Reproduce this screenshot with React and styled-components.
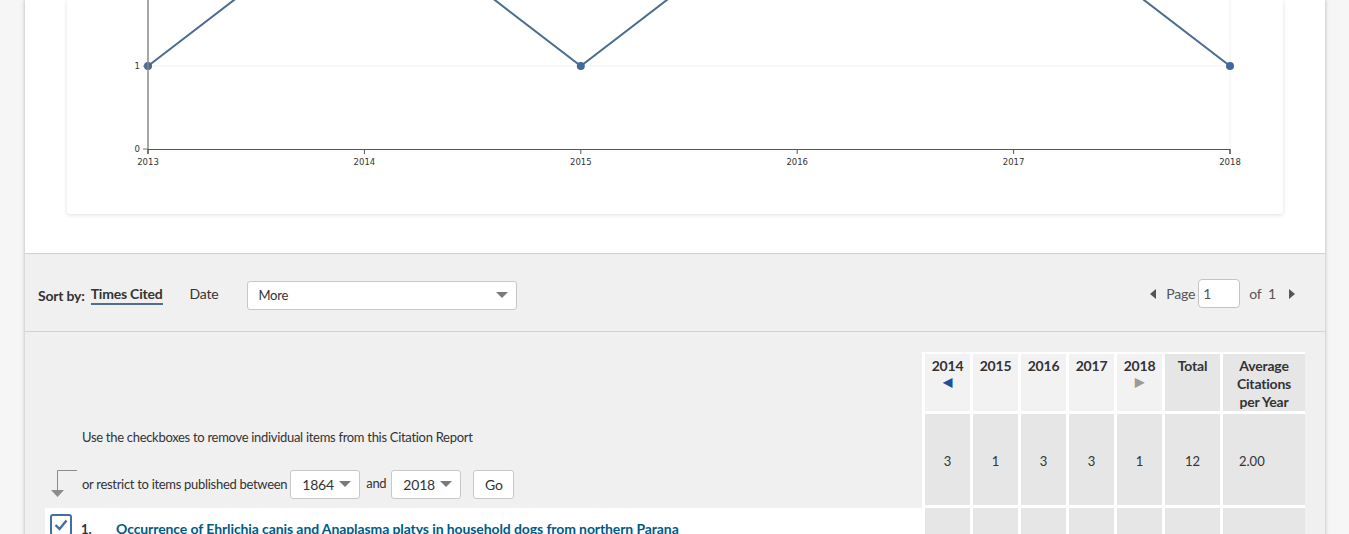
import React from "react";
import styled, { createGlobalStyle } from "styled-components";

const Global = createGlobalStyle`
  html, body { margin: 0; padding: 0; background: #f6f6f6; }
  body { font-family: "Lato", "Liberation Sans", sans-serif; color: #333; overflow: hidden; }
  * { box-sizing: border-box; }
`;

const Page = styled.div`
  margin: 0 24px 0 25px;
  background: #f0f0f0;
  box-shadow: 0 0 4px rgba(0, 0, 0, 0.28);
  min-height: 534px;
`;

const TopSection = styled.section`
  background: #fff;
  padding: 0 42px 39px;
  border-bottom: 1px solid #d2d2d2;
`;

const ChartCard = styled.div`
  background: #fff;
  height: 214px;
  border-radius: 0 0 3px 3px;
  box-shadow: 0 1px 4px rgba(0, 0, 0, 0.13);
  overflow: hidden;
`;

const SortBar = styled.div`
  height: 78px;
  display: flex;
  align-items: center;
  padding: 5px 30px 0 13px;
  border-bottom: 1px solid #d2d2d2;
  font-size: 14px;
  letter-spacing: -0.2px;
`;

const SortLabel = styled.span`
  font-weight: 700;
  color: #333;
  margin-right: 6px;
`;

const SortOption = styled.span`
  font-weight: ${(p) => (p.$active ? 700 : 400)};
  color: #333;
  margin-right: ${(p) => p.$mr || 0}px;
  padding-bottom: 1px;
  border-bottom: ${(p) => (p.$active ? "2px solid #4d6f91" : "2px solid transparent")};
`;

const Select = styled.div`
  display: flex;
  align-items: center;
  justify-content: space-between;
  width: ${(p) => p.$w}px;
  height: ${(p) => p.$h || 29}px;
  background: #fff;
  border: 1px solid #c8c8c8;
  border-radius: 3px;
  padding: 0 ${(p) => p.$pr || 10}px 0 ${(p) => p.$pl || 10}px;
  font-size: ${(p) => p.$fs || 13}px;
  letter-spacing: -0.2px;
  color: #333;
  flex-shrink: 0;
`;

const Caret = styled.span`
  width: 0;
  height: 0;
  border-left: 6px solid transparent;
  border-right: 6px solid transparent;
  border-top: 6px solid #7a7a7a;
`;

const Spacer = styled.div`
  flex: 1;
`;

const Pager = styled.div`
  display: flex;
  align-items: center;
  font-size: 14px;
  color: #555;
  margin-top: -3px;
`;

const Tri = styled.span`
  width: 0;
  height: 0;
  border-top: 5px solid transparent;
  border-bottom: 5px solid transparent;
  ${(p) =>
    p.$dir === "left"
      ? `border-right: 6px solid #555; margin-right: 10px;`
      : `border-left: 6px solid #555; margin-left: 13px;`}
`;

const PageInput = styled.div`
  width: 42px;
  height: 29px;
  margin: 0 9px 0 3px;
  background: #fff;
  border: 1px solid #c4c4c4;
  border-radius: 4px;
  padding: 5px 0 0 4px;
  font-size: 14px;
  color: #555;
`;

const Lower = styled.section`
  padding: 20px 20px 0;
`;

const Grid = styled.div`
  display: grid;
  grid-template-columns: 877px repeat(5, 48px) 58px 85px;
  grid-template-rows: 62px 94px auto;
`;

const InfoCell = styled.div`
  grid-row: span 2;
  display: flex;
  flex-direction: column;
  justify-content: flex-end;
  padding: 0 0 10px 5px;
  font-size: 13px;
  letter-spacing: -0.3px;
  color: #333;
`;

const InfoText = styled.div`
  margin-left: 32px;
  line-height: 18px;
  margin-bottom: 24px;
`;

const RestrictRow = styled.div`
  display: flex;
  align-items: center;
  height: 28px;
`;

const RestrictText = styled.span`
  margin: 0 3px 0 4px;
`;

const AndText = styled.span`
  margin: 0 5px 3px 6px;
`;

const GoButton = styled.div`
  margin-left: 12px;
  width: 41px;
  height: 29px;
  background: #fff;
  border: 1px solid #c8c8c8;
  border-radius: 3px;
  display: flex;
  align-items: center;
  justify-content: center;
  font-size: 14px;
`;

const HeadCell = styled.div`
  background: ${(p) => (p.$dark ? "#e6e6e6" : "#f2f2f2")};
  border-left: 3px solid #fff;
  border-top: 2px solid #fff;
  border-bottom: 3px solid #fff;
  display: flex;
  flex-direction: column;
  align-items: center;
  padding-top: 3px;
  font-size: 14px;
  font-weight: 700;
  line-height: 18px;
  letter-spacing: -0.2px;
  color: #333;
  text-align: center;
`;

const YearArrow = styled.span`
  font-size: 12px;
  line-height: 14px;
  color: ${(p) => (p.$on ? "#1d4f9a" : "#9a9a9a")};
`;

const DataCell = styled.div`
  background: #e6e6e6;
  border-left: 3px solid #fff;
  border-bottom: 3px solid #fff;
  display: flex;
  align-items: center;
  justify-content: ${(p) => (p.$left ? "flex-start" : "center")};
  padding-left: ${(p) => (p.$left ? 16 : 0)}px;
  padding-top: 2px;
  font-size: 13px;
  color: #333;
  min-height: ${(p) => p.$h || 0}px;
`;

const ItemCell = styled.div`
  background: #fff;
  display: flex;
  align-items: flex-start;
  padding: 6px 0 0 5px;
  height: 60px;
  font-size: 13px;
`;

const CheckBox = styled.div`
  width: 22px;
  height: 22px;
  border: 2px solid #3f6fa8;
  border-radius: 3px;
  display: flex;
  align-items: center;
  justify-content: center;
  flex-shrink: 0;
`;

const ItemNum = styled.span`
  margin: 7px 0 0 9px;
  width: 35px;
  font-weight: 700;
  font-size: 13px;
`;

const ItemTitle = styled.a`
  margin-top: 6px;
  color: #005a87;
  font-weight: 700;
  font-size: 14px;
  letter-spacing: -0.1px;
  text-decoration: underline;
`;

const years = [2013, 2014, 2015, 2016, 2017, 2018];
const values = [1, 3, 1, 3, 3, 1];

function Chart() {
  const x0 = 81;
  const x1 = 1163;
  const step = (x1 - x0) / 5;
  const yOf = (v) => 149 - 83 * v;
  const pts = values.map((v, i) => [x0 + step * i, yOf(v)]);
  const d = pts.map((p, i) => `${i ? "L" : "M"}${p[0]},${p[1]}`).join(" ");
  return (
    <svg width="1216" height="214" style={{ display: "block" }}>
      <line x1={x0} y1={66} x2={x1} y2={66} stroke="#f2f2f2" strokeWidth="1" />
      <line x1={x1} y1={0} x2={x1} y2={149} stroke="#f2f2f2" strokeWidth="1" />
      <path d={d} fill="none" stroke="#4a6c8f" strokeWidth="2" />
      {pts
        .filter((p) => p[1] > 0)
        .map((p, i) => (
          <circle key={i} cx={p[0]} cy={p[1]} r="4" fill="#41699a" />
        ))}
      <line x1={x0} y1={0} x2={x0} y2={149} stroke="#8a8a8a" strokeWidth="1.5" />
      <line x1={76} y1={66} x2={x0} y2={66} stroke="#777" strokeWidth="1" />
      <line x1={76} y1={149} x2={x0} y2={149} stroke="#777" strokeWidth="1" />
      <path d={`M${x0},154V149.5H${x1}V154`} fill="none" stroke="#555" strokeWidth="1.2" />
      {years.map((y, i) => (
        <line key={y} x1={x0 + step * i} y1={149} x2={x0 + step * i} y2={154} stroke="#555" strokeWidth="1" />
      ))}
      <g fontFamily="'DejaVu Sans', sans-serif" fontSize="8.5" fill="#333">
        <text x={73} y={69} textAnchor="end">1</text>
        <text x={73} y={152} textAnchor="end">0</text>
        {years.map((y, i) => (
          <text key={y} x={x0 + step * i} y={165} textAnchor="middle">{y}</text>
        ))}
      </g>
    </svg>
  );
}

function ArrowIcon() {
  return (
    <svg width="28" height="30" viewBox="0 0 28 30" style={{ flexShrink: 0, marginTop: 2 }}>
      <path d="M27,0.5 H7.5 V20" fill="none" stroke="#8c8c8c" strokeWidth="1" />
      <path d="M1,20 H14 L7.5,27 Z" fill="#8c8c8c" />
    </svg>
  );
}

export default function App() {
  const yearCols = [2014, 2015, 2016, 2017, 2018];
  const counts = [3, 1, 3, 3, 1];
  return (
    <>
      <Global />
      <Page>
        <TopSection>
          <ChartCard>
            <Chart />
          </ChartCard>
        </TopSection>
        <SortBar>
          <SortLabel>Sort by:</SortLabel>
          <SortOption $active $mr={27}>Times Cited</SortOption>
          <SortOption $mr={29}>Date</SortOption>
          <Select $w={270} $pr={8}>
            <span>More</span>
            <Caret />
          </Select>
          <Spacer />
          <Pager>
            <Tri $dir="left" />
            <span>Page</span>
            <PageInput>1</PageInput>
            <span>of&nbsp;&nbsp;1</span>
            <Tri $dir="right" />
          </Pager>
        </SortBar>
        <Lower>
          <Grid>
            <InfoCell>
              <InfoText>Use the checkboxes to remove individual items from this Citation Report</InfoText>
              <RestrictRow>
                <ArrowIcon />
                <RestrictText>or restrict to items published between</RestrictText>
                <Select $w={70} $h={29} $fs={14} $pl={11} $pr={8}>
                  <span>1864</span>
                  <Caret />
                </Select>
                <AndText>and</AndText>
                <Select $w={70} $h={29} $fs={14} $pl={11} $pr={8}>
                  <span>2018</span>
                  <Caret />
                </Select>
                <GoButton>Go</GoButton>
              </RestrictRow>
            </InfoCell>
            {yearCols.map((y, i) => (
              <HeadCell key={y}>
                <span>{y}</span>
                {i === 0 && <YearArrow $on>◀</YearArrow>}
                {i === 4 && <YearArrow>▶</YearArrow>}
              </HeadCell>
            ))}
            <HeadCell $dark>Total</HeadCell>
            <HeadCell $dark>
              Average
              <br />
              Citations
              <br />
              per Year
            </HeadCell>
            {counts.map((c, i) => (
              <DataCell key={i}>{c}</DataCell>
            ))}
            <DataCell>12</DataCell>
            <DataCell $left>2.00</DataCell>
            <ItemCell>
              <CheckBox>
                <svg width="14" height="12" viewBox="0 0 14 12">
                  <path d="M1.5,6 L5.5,10 L12.5,1.5" fill="none" stroke="#3f6fa8" strokeWidth="2.4" />
                </svg>
              </CheckBox>
              <ItemNum>1.</ItemNum>
              <ItemTitle>Occurrence of Ehrlichia canis and Anaplasma platys in household dogs from northern Parana</ItemTitle>
            </ItemCell>
            {[0, 1, 2, 3, 4, 5, 6].map((i) => (
              <DataCell key={i} $h={60} />
            ))}
          </Grid>
        </Lower>
      </Page>
    </>
  );
}
